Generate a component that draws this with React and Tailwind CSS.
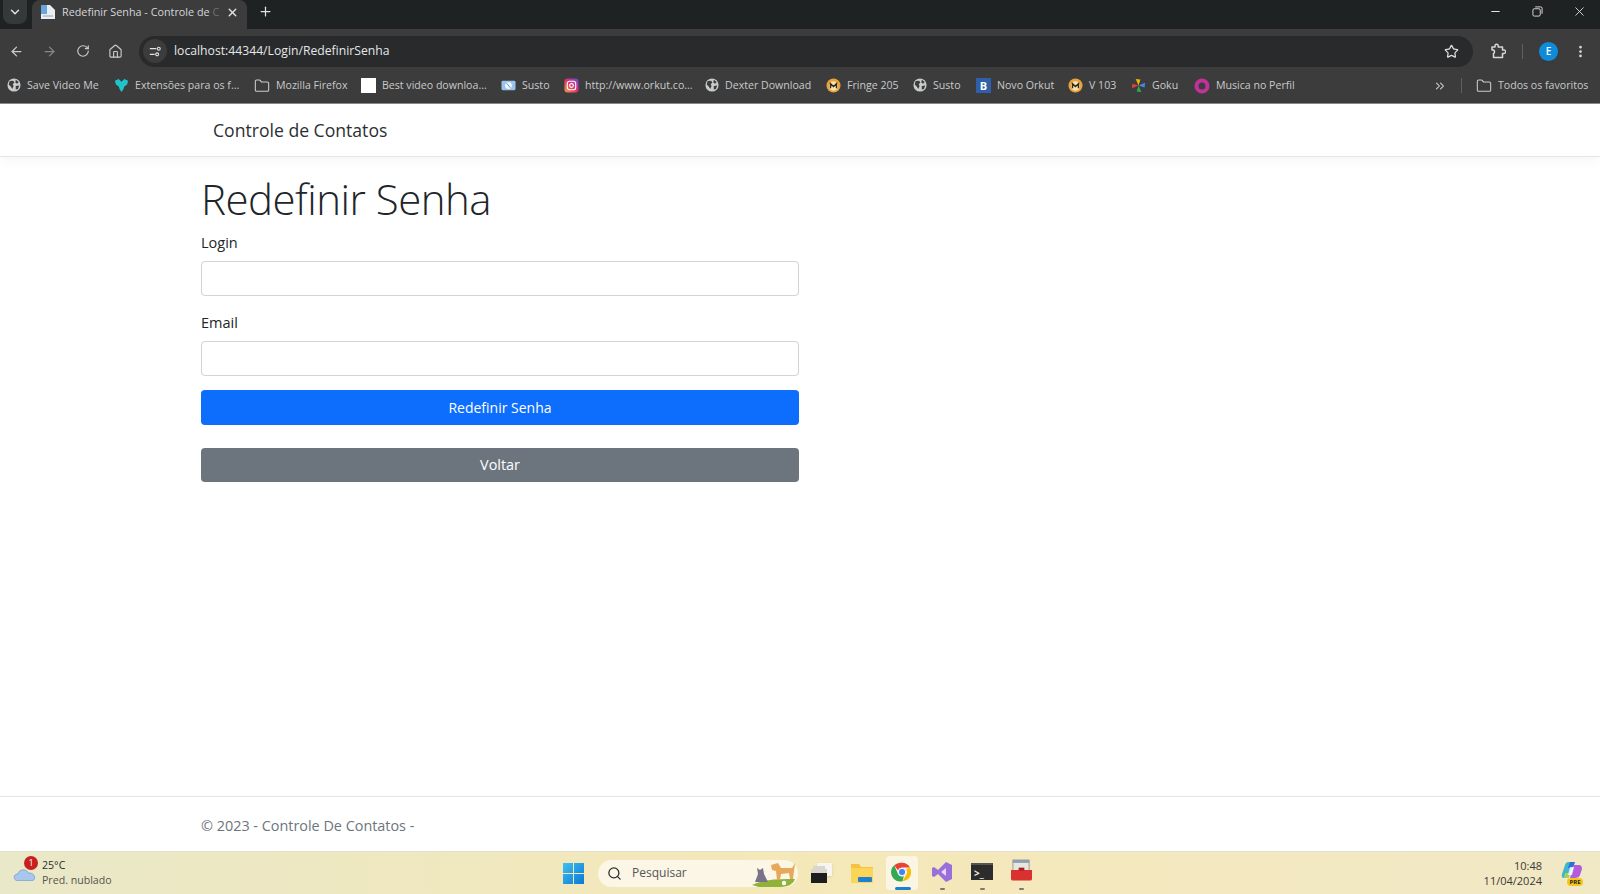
import React from 'react';
import {
  ArrowLeft, ArrowRight, ChevronDown, ChevronsRight, EllipsisVertical, Folder, House, Minus, Plus,
  RotateCw, Search, Star, X,
} from 'lucide-react';

const GlobeIcon = () => (
  <svg viewBox="0 0 16 16" className="w-[14px] h-[14px]">
    <circle cx="8" cy="8" r="7.5" fill="#c9cbcc" />
    <path d="M3 3.5 L7 3 L8.5 5 L6.5 7 L7.5 9 L6 12.5 L4.5 10 L2 7.5 Z" fill="#3c3c3c" />
    <path d="M10 2 L13.5 4.5 L11.5 6.5 L9.5 5 Z M10 9 L14 8.5 L12.5 12.5 L10 13 Z" fill="#3c3c3c" />
  </svg>
);

const MegaIcon = () => (
  <svg viewBox="0 0 16 16" className="w-[15px] h-[15px]">
    <circle cx="8" cy="8" r="7.5" fill="#e8a33a" />
    <circle cx="8" cy="8.5" r="5" fill="#f6e3b4" />
    <path d="M4.8 11 V6 L8 9 L11.2 6 V11" fill="none" stroke="#3a2a10" strokeWidth="1.6" />
  </svg>
);

const bookmarks = [
  { label: 'Save Video Me', w: 'w-[107px]', icon: <GlobeIcon /> },
  {
    label: 'Extensões para os f...', w: 'w-[140px]',
    icon: (
      <svg viewBox="0 0 16 16" className="w-[15px] h-[15px]">
        <path d="M1 3 L5 1 L8 4 L11 1 L15 3 L14 7 L11 9 L10 12 L8 15 L6 12 L5 9 L2 7 Z" fill="#1fc4c9" />
      </svg>
    ),
  },
  { label: 'Mozilla Firefox', w: 'w-[107px]', icon: <Folder size={16} strokeWidth={1.6} className="text-[#c9cbcc]" /> },
  { label: 'Best video downloa...', w: 'w-[140px]', icon: <div className="w-[15px] h-[15px] bg-white" /> },
  {
    label: 'Susto', w: 'w-[63px]',
    icon: (
      <svg viewBox="0 0 16 16" className="w-[15px] h-[15px]">
        <rect x="0.5" y="3" width="15" height="10" rx="1.5" fill="#9cc3ee" />
        <circle cx="8" cy="8" r="3.6" fill="#f3f6fa" />
        <path d="M6 5.5 L10 10.5" stroke="#5f8fc7" strokeWidth="1" />
      </svg>
    ),
  },
  {
    label: 'http://www.orkut.co...', w: 'w-[141px]',
    icon: (
      <svg viewBox="0 0 16 16" className="w-[15px] h-[15px]">
        <defs>
          <linearGradient id="ig" x1="0" y1="1" x2="1" y2="0">
            <stop offset="0" stopColor="#f9a13a" />
            <stop offset="0.5" stopColor="#e1306c" />
            <stop offset="1" stopColor="#6a4bd8" />
          </linearGradient>
        </defs>
        <rect x="0.5" y="0.5" width="15" height="15" rx="3.5" fill="url(#ig)" />
        <rect x="3.5" y="3.5" width="9" height="9" rx="2.5" fill="none" stroke="#fff" strokeWidth="1.2" />
        <circle cx="8" cy="8" r="2" fill="none" stroke="#fff" strokeWidth="1.2" />
      </svg>
    ),
  },
  { label: 'Dexter Download', w: 'w-[121px]', icon: <GlobeIcon /> },
  { label: 'Fringe 205', w: 'w-[87px]', icon: <MegaIcon /> },
  { label: 'Susto', w: 'w-[63px]', icon: <GlobeIcon /> },
  {
    label: 'Novo Orkut', w: 'w-[92px]',
    icon: (
      <div className="w-[15px] h-[15px] bg-[#2f5fa8] text-white text-[11px] font-bold leading-[15px] text-center">B</div>
    ),
  },
  { label: 'V 103', w: 'w-[63px]', icon: <MegaIcon /> },
  {
    label: 'Goku', w: 'w-[63px]',
    icon: (
      <svg viewBox="0 0 16 16" className="w-[15px] h-[15px]">
        <path d="M8 8 L5 1 L10 1.5 Z" fill="#f4b400" />
        <path d="M8 8 L15 5 L14.5 10 Z" fill="#4285f4" />
        <path d="M8 8 L11 15 L6 14.5 Z" fill="#34a853" />
        <path d="M8 8 L1 11 L1.5 6 Z" fill="#db4437" />
      </svg>
    ),
  },
  {
    label: 'Musica no Perfil', w: 'w-[110px]',
    icon: (
      <svg viewBox="0 0 16 16" className="w-[16px] h-[16px]">
        <circle cx="8" cy="8" r="5.5" fill="none" stroke="#c2309b" strokeWidth="4" />
      </svg>
    ),
  },
];

function TabStrip() {
  return (
    <div className="h-[29px] bg-[#1f2223] flex items-start text-[#dfe1e2] relative">
      <div className="w-[24px] h-[24px] ml-[3px] mt-0 rounded-b-lg bg-[#35393a] flex items-center justify-center">
        <ChevronDown size={14} strokeWidth={2.5} />
      </div>
      <div className="w-[215px] h-[29px] ml-[5px] rounded-t-lg bg-[#3c3c3c] flex items-center pl-[8px] pr-[8px] pb-[5px]">
        <svg viewBox="0 0 16 16" className="w-[16px] h-[16px] shrink-0">
          <path d="M1 1 H10 L15 6 V15 H1 Z" fill="#e9eef3" />
          <rect x="1" y="1" width="6" height="9" fill="#6aa5dc" />
          <path d="M3 12 H13" stroke="#9fb3c6" strokeWidth="1.2" />
        </svg>
        <span className="ml-[6px] text-[10.8px] text-[#d5d7d8] whitespace-nowrap">
          Redefinir Senha - Controle de <span className="text-[#6f7071]">C</span>
        </span>
        <X size={13} strokeWidth={2.5} className="ml-auto shrink-0" />
      </div>
      <Plus size={15} strokeWidth={2} className="ml-[11px] mt-[4px]" />
      <div className="ml-auto flex items-center h-[23px] text-[#e3e3e3]">
        <Minus size={13} className="mr-[30px]" />
        <svg viewBox="0 0 12 12" className="w-[11px] h-[11px] mr-[29px]" fill="none" stroke="currentColor" strokeWidth="1">
          <rect x="1" y="3" width="8" height="8" rx="1.5" />
          <path d="M3.5 1 H9.5 A1.5 1.5 0 0 1 11 2.5 V8.5" />
        </svg>
        <X size={15} strokeWidth={1.4} className="mr-[13px]" />
      </div>
    </div>
  );
}

function Toolbar() {
  return (
    <div className="h-[41px] bg-[#3c3c3c] flex items-center pt-[3px] text-[#c9cbcc]">
      <ArrowLeft size={15} strokeWidth={2} className="ml-[9px]" />
      <ArrowRight size={15} strokeWidth={2} className="ml-[18px] text-[#85888a]" />
      <RotateCw size={14} strokeWidth={2} className="ml-[19px]" />
      <House size={15} strokeWidth={1.8} className="ml-[18px]" />
      <div className="ml-[16px] w-[1334px] h-[31px] rounded-full bg-[#282a2b] flex items-center">
        <div className="ml-[4px] w-[24px] h-[24px] rounded-full bg-[#3c3c3c] flex items-center justify-center">
          <svg viewBox="0 0 16 16" className="w-[13px] h-[13px]" fill="none" stroke="#e3e3e3" strokeWidth="1.4">
            <path d="M1 4.5 H9 M1 11.5 H7" />
            <circle cx="12" cy="4.5" r="1.8" />
            <circle cx="10" cy="11.5" r="1.8" />
          </svg>
        </div>
        <span className="ml-[7px] text-[12.2px] text-[#e6e7e8]">localhost:44344/Login/RedefinirSenha</span>
        <Star size={15} strokeWidth={2} className="ml-auto mr-[14px] text-[#dcdedf]" />
      </div>
      <svg viewBox="0 0 16 16" className="ml-[17px] w-[16px] h-[16px] text-[#d5d7d8]" fill="none" stroke="currentColor" strokeWidth="1.5" strokeLinejoin="round">
        <path d="M2 4 H5 V2.8 A1.6 1.6 0 0 1 8.2 2.8 V4 H12.5 V7 H14 A1.7 1.7 0 0 1 14 10.4 H12.5 V14.5 H3.5 V10.5 A2 2 0 0 0 3.5 7 H2 Z" />
      </svg>
      <div className="ml-[16px] w-px h-[15px] bg-[#5e6062]" />
      <div className="ml-[16px] w-[19px] h-[19px] rounded-full bg-[#0f8bdc] text-white text-[10px] font-semibold flex items-center justify-center">
        E
      </div>
      <EllipsisVertical size={15} strokeWidth={2.4} className="ml-[15px] text-[#d5d7d8]" />
    </div>
  );
}

function BookmarkBar() {
  return (
    <div className="h-[34px] bg-[#3c3c3c] border-b border-[#8a8a8a] flex items-center pl-[7px] pb-[2px] text-[10.6px] text-[#c8cacb] whitespace-nowrap">
      {bookmarks.map((b, i) => (
        <div key={i} className={`${b.w} flex items-center gap-[6px] shrink-0`}>
          {b.icon}
          <span>{b.label}</span>
        </div>
      ))}
      <ChevronsRight size={14} strokeWidth={1.8} className="ml-[129px] text-[#d5d7d8]" />
      <div className="ml-[14px] w-px h-[15px] bg-[#5e6062]" />
      <Folder size={16} strokeWidth={1.6} className="ml-[14px] text-[#c9cbcc]" />
      <span className="ml-[6px]">Todos os favoritos</span>
    </div>
  );
}

function Taskbar() {
  return (
    <div className="h-[43px] border-t border-[#e3e0cc] bg-gradient-to-r from-[#e9e8c8] via-[#f5e8b8] to-[#f1e8c6] flex items-center relative">
      <div className="w-[563px] shrink-0 flex items-center pl-[13px]">
        <div className="relative w-[23px] h-[30px] shrink-0">
          <svg viewBox="0 0 24 14" className="absolute left-0 bottom-[7px] w-[23px] h-[14px]">
            <path d="M5 14 C0 14 0 7 5 7 C6 2 14 1 16 6 C23 5 25 14 19 14 Z" fill="#a9c6ec" stroke="#6f9bd6" strokeWidth="0.8" />
          </svg>
          <div className="absolute left-[11px] -top-[2px] w-[14px] h-[14px] rounded-full bg-[#c8201f] text-white text-[9px] leading-[14px] text-center">
            1
          </div>
        </div>
        <div className="ml-[6px] text-[10.6px] leading-[15px] text-[#2b2b2b]">
          <div className="font-medium">25°C</div>
          <div className="text-[#55554c]">Pred. nublado</div>
        </div>
      </div>

      <svg viewBox="0 0 21 21" className="w-[21px] h-[21px] shrink-0">
        <defs>
          <linearGradient id="win" x1="0" y1="0" x2="1" y2="1">
            <stop offset="0" stopColor="#3fc0f0" />
            <stop offset="1" stopColor="#0a78d4" />
          </linearGradient>
        </defs>
        <path d="M0 0 H10 V10 H0 Z M11 0 H21 V10 H11 Z M0 11 H10 V21 H0 Z M11 11 H21 V21 H11 Z" fill="url(#win)" />
      </svg>

      <div className="ml-[14px] w-[200px] h-[27px] rounded-full bg-[#fbf6e6] flex items-center pl-[9px] relative shrink-0">
        <Search size={15} strokeWidth={2} className="text-[#2b2b2b]" />
        <span className="ml-[10px] text-[12px] text-[#555]">Pesquisar</span>
        <svg viewBox="0 0 46 28" className="absolute right-[1px] top-[0px] w-[46px] h-[28px]">
          <path d="M1 25 Q14 18 44 19 Q42 26 30 27 H8 Z" fill="#8fb33a" />
          <path d="M4 22 L7 14 L6 8 L9 10 L12 8 L13 14 L17 22 Z" fill="#7a7288" />
          <path d="M20 5 L27 3 L30 8 L41 8 L44 3 L42 19 L39 19 L38 13 L30 14 L29 20 L26 20 L25 11 L21 10 Z" fill="#e7a85a" />
          <circle cx="33" cy="23" r="2.2" fill="#fff" />
        </svg>
      </div>

      <div className="ml-[13px] w-[21px] h-[20px] relative shrink-0">
        <div className="absolute left-[6px] top-0 w-[15px] h-[13px] bg-[#f7f5ee] shadow-sm" />
        <div className="absolute left-[2px] top-[3px] w-[12px] h-[13px] bg-[#d8d6ce]" />
        <div className="absolute left-0 bottom-0 w-[16px] h-[14px] bg-[#1d1d1d] border-t-[4px] border-[#d8d6ce]" />
      </div>

      <svg viewBox="0 0 22 21" className="ml-[19px] w-[22px] h-[21px] shrink-0">
        <path d="M0 1 H8 L10 4 H22 V20 H0 Z" fill="#f5c242" />
        <rect x="0" y="5" width="22" height="15" fill="#fbd558" />
        <rect x="7" y="14" width="14" height="5" rx="1" fill="#1f7fd1" />
      </svg>

      <div className="ml-[13px] w-[32px] h-[34px] rounded bg-[#fbf5e3] relative flex items-center justify-center shrink-0">
        <svg viewBox="0 0 48 48" className="w-[22px] h-[22px] -mt-[2px]">
          <path d="M24 4 A20 20 0 0 1 41.3 14 H24 A10 10 0 0 0 15 20 L7 9.5 A20 20 0 0 1 24 4 Z" fill="#ea4335" />
          <path d="M41.3 14 A20 20 0 0 1 25 44 L33 30 A10 10 0 0 0 33 18 Z" fill="#fbbc04" />
          <path d="M25 44 A20 20 0 0 1 7 9.5 L15.5 29 A10 10 0 0 0 28 33 Z" fill="#34a853" />
          <circle cx="24" cy="24" r="8" fill="#4285f4" stroke="#fff" strokeWidth="2" />
        </svg>
        <div className="absolute left-[9px] bottom-0 w-[16px] h-[3px] rounded-full bg-[#1f7fd1]" />
      </div>

      <div className="ml-[13px] w-[22px] h-[34px] relative flex justify-center shrink-0">
        <svg viewBox="0 0 22 22" className="w-[22px] h-[22px] mt-[5px]">
          <path d="M15 1 L21 4 V18 L15 21 L7 13 L3 16 L1 15 V7 L3 6 L7 9 Z" fill="#9a6fdc" />
          <path d="M15 7 V15 L10 11 Z" fill="#e6d9f7" />
        </svg>
        <div className="absolute bottom-0 w-[5px] h-[2px] rounded-full bg-[#7a7a70]" />
      </div>

      <div className="ml-[18px] w-[22px] h-[34px] relative flex justify-center shrink-0">
        <div className="w-[22px] h-[17px] mt-[7px] bg-[#2c2c2c] border-t-[2px] border-[#555] flex items-center pl-[3px]">
          <span className="text-[#eee] text-[10px] leading-none font-bold">&gt;_</span>
        </div>
        <div className="absolute bottom-0 w-[5px] h-[2px] rounded-full bg-[#7a7a70]" />
      </div>

      <div className="ml-[17px] w-[22px] h-[34px] relative flex justify-center shrink-0">
        <svg viewBox="0 0 22 24" className="w-[21px] h-[24px] mt-[3px]">
          <rect x="2" y="0.5" width="17" height="11" fill="#e8e6e0" stroke="#9a9a9a" />
          <rect x="2" y="0.5" width="17" height="3" fill="#8f9fb0" />
          <path d="M0 11 H22 V20 Q22 22 20 22 H2 Q0 22 0 20 Z" fill="#d8312f" />
          <rect x="8" y="8.5" width="6" height="3" fill="#a81f1e" />
        </svg>
        <div className="absolute bottom-0 w-[5px] h-[2px] rounded-full bg-[#7a7a70]" />
      </div>

      <div className="ml-auto text-right text-[11px] leading-[15px] text-[#3a3a36]">
        <div>10:48</div>
        <div>11/04/2024</div>
      </div>

      <div className="ml-[19px] mr-[17px] w-[22px] h-[25px] relative shrink-0">
        <svg viewBox="0 0 22 20" className="w-[22px] h-[20px]">
          <path d="M7 1 H13 L9 13 Q8 17 4 17 H3 Q0 17 1 13 L4 4 Q5 1 7 1 Z" fill="#3fb6c9" />
          <path d="M9 1 H14 L12 7 H7 Z" fill="#2a6fdb" />
          <path d="M13 4 H18 Q21 4 21 8 L19 14 Q18 17 14 17 H9 L12 8 Z" fill="#b35ddc" />
          <path d="M4 12 H9 L8 17 H3 Z" fill="#a6d15a" />
          <path d="M9 6 L13 6 L11 14 L7 14 Z" fill="#fff" opacity="0.8" />
        </svg>
        <div className="absolute left-[6px] bottom-0 w-[16px] h-[8px] rounded-sm bg-[#f5c518] text-[6px] leading-[8px] font-bold text-center text-[#222]">
          PRE
        </div>
      </div>
    </div>
  );
}

export default function App() {
  return (
    <div className="h-[894px] flex flex-col overflow-hidden bg-white font-['Open_Sans',sans-serif]">
      <TabStrip />
      <Toolbar />
      <BookmarkBar />

      <nav className="h-[53px] shrink-0 border-b border-[#e4e6e8] shadow-[0_4px_12px_rgba(0,0,0,0.04)] flex items-center pl-[213px]">
        <span className="text-[17.6px] text-[#2b2f33]">Controle de Contatos</span>
      </nav>

      <main className="flex-1 pl-[201px]">
        <div className="w-[598px]">
          <h1 className="mt-[18px] text-[42px] leading-[48px] font-light text-[#212529] tracking-[-0.5px]">
            Redefinir Senha
          </h1>
          <div className="mt-[8px]">
            <label className="block text-[14.5px] leading-[24px] text-[#212529] mb-[6px]">Login</label>
            <input className="block w-full h-[35px] rounded border border-[#ced4da] bg-white" />
          </div>
          <div className="mt-[15px]">
            <label className="block text-[14.5px] leading-[24px] text-[#212529] mb-[6px]">Email</label>
            <input className="block w-full h-[35px] rounded border border-[#ced4da] bg-white" />
          </div>
          <button className="block w-full h-[35px] mt-[14px] rounded bg-[#0d6efd] text-white text-[14px]">
            Redefinir Senha
          </button>
          <button className="block w-full h-[34px] mt-[23px] rounded bg-[#6c757d] text-white text-[14.4px]">
            Voltar
          </button>
        </div>
      </main>

      <footer className="h-[55px] shrink-0 border-t border-[#e4e6e8] flex items-center pl-[201px] pt-[3px] text-[14.4px] text-[#6c757d]">
        © 2023 - Controle De Contatos -
      </footer>

      <Taskbar />
    </div>
  );
}
